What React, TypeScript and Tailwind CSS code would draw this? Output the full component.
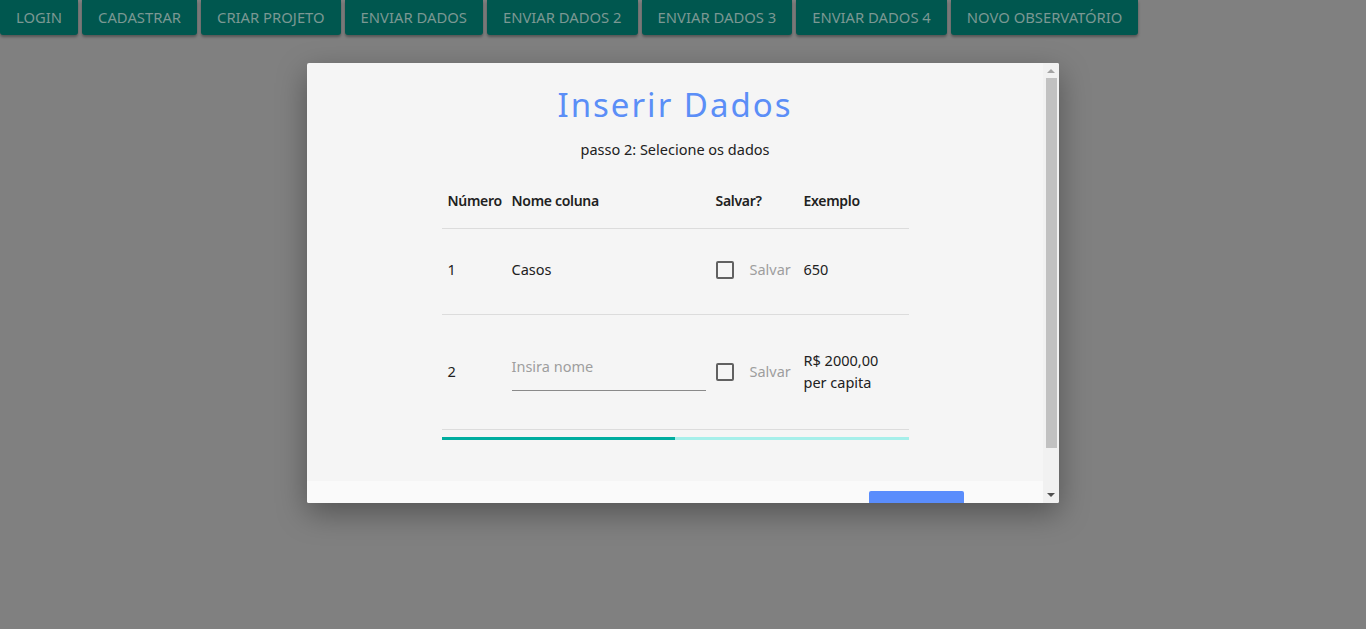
import React from "react";

const buttons = [
  "LOGIN",
  "CADASTRAR",
  "CRIAR PROJETO",
  "ENVIAR DADOS",
  "ENVIAR DADOS 2",
  "ENVIAR DADOS 3",
  "ENVIAR DADOS 4",
  "NOVO OBSERVATÓRIO",
];

const font = { fontFamily: '"Noto Sans", "Open Sans", sans-serif' };

function Checkbox() {
  return <div className="w-[18px] h-[18px] border-2 border-[#616161] rounded-[2px] shrink-0" />;
}

function Scrollbar() {
  return (
    <div className="w-[16px] h-full bg-[#f1f1f1] flex flex-col items-center shrink-0">
      <div className="h-[15px] w-full flex items-center justify-center pt-[1px]">
        <svg width="8" height="5" viewBox="0 0 8 5">
          <polygon points="4,0 8,4 0,4" fill="#a3a3a3" />
        </svg>
      </div>
      <div className="w-[11px] h-[370px] bg-[#c1c1c1]" />
      <div className="flex-1" />
      <div className="h-[15px] w-full flex items-center justify-center pb-[1px]">
        <svg width="8" height="5" viewBox="0 0 8 5">
          <polygon points="0,0 8,0 4,4" fill="#505050" />
        </svg>
      </div>
    </div>
  );
}

export default function App() {
  return (
    <div className="relative w-[1366px] h-[629px] bg-[#808080] overflow-hidden" style={font}>
      <div className="flex gap-[4px]">
        {buttons.map((b) => (
          <div
            key={b}
            className="h-[35px] px-[16px] flex items-center bg-[#00574f] text-[#7b9893] text-[14.8px] rounded-b-[3px] shadow-[0_2px_3px_rgba(0,0,0,0.35)]"
          >
            {b}
          </div>
        ))}
      </div>

      <div className="absolute left-[307px] top-[63px] w-[752px] h-[440px] bg-[#f5f5f5] rounded-[2px] shadow-[0_10px_30px_rgba(0,0,0,0.35)] overflow-hidden flex">
        <div className="flex-1 pt-[22px]">
          <h1 className="text-center text-[33px] leading-[40px] tracking-[2px] text-[#5b8ef7] font-normal">
            Inserir Dados
          </h1>
          <p className="mt-[14px] text-center text-[14.5px] leading-[20px] text-[#212121]">
            passo 2: Selecione os dados
          </p>
          <div className="mt-[15px] mx-auto w-[467px] text-[14.5px] text-[#212121]">
            <div className="flex h-[55px] border-b border-[#dcdcdc] items-center font-semibold text-[14px] pb-[2px]">
              <div className="w-[64px] pl-[6px] tracking-[-0.3px]">Número</div>
              <div className="w-[205px] pl-[6px] tracking-[-0.3px]">Nome coluna</div>
              <div className="w-[87px] pl-[5px] tracking-[-0.3px]">Salvar?</div>
              <div className="w-[111px] pl-[6px] tracking-[-0.3px]">Exemplo</div>
            </div>
            <div className="flex h-[86px] border-b border-[#dcdcdc] items-center pb-[3px]">
              <div className="w-[64px] pl-[6px]">1</div>
              <div className="w-[205px] pl-[6px]">Casos</div>
              <div className="w-[87px] pl-[5px] flex items-center gap-[16px]">
                <Checkbox />
                <span className="text-[#9e9e9e]">Salvar</span>
              </div>
              <div className="w-[111px] pl-[6px]">650</div>
            </div>
            <div className="flex h-[115px] border-b border-[#dcdcdc] items-center">
              <div className="w-[64px] pl-[6px]">2</div>
              <div className="w-[205px] pl-[6px]">
                <div className="w-[194px] h-[40px] border-b border-[#8a8a8a] flex items-center pb-[8px] text-[#9e9e9e] mt-[-2px]">
                  Insira nome
                </div>
              </div>
              <div className="w-[87px] pl-[5px] flex items-center gap-[16px]">
                <Checkbox />
                <span className="text-[#9e9e9e]">Salvar</span>
              </div>
              <div className="w-[111px] pl-[6px] leading-[22px] pb-[2px]">
                R$ 2000,00
                <br />
                per capita
              </div>
            </div>
            <div className="mt-[7px] h-[3px] flex">
              <div className="w-1/2 bg-[#00ad9f]" />
              <div className="w-1/2 bg-[#a6efea]" />
            </div>
          </div>
          <div className="h-[41px]" />
          <div className="h-[70px] bg-[#fafafa] pt-[10px] pl-[562px]">
            <div className="w-[95px] h-[36px] bg-[#5a8dfc] rounded-[2px]" />
          </div>
        </div>
        <Scrollbar />
      </div>
    </div>
  );
}
